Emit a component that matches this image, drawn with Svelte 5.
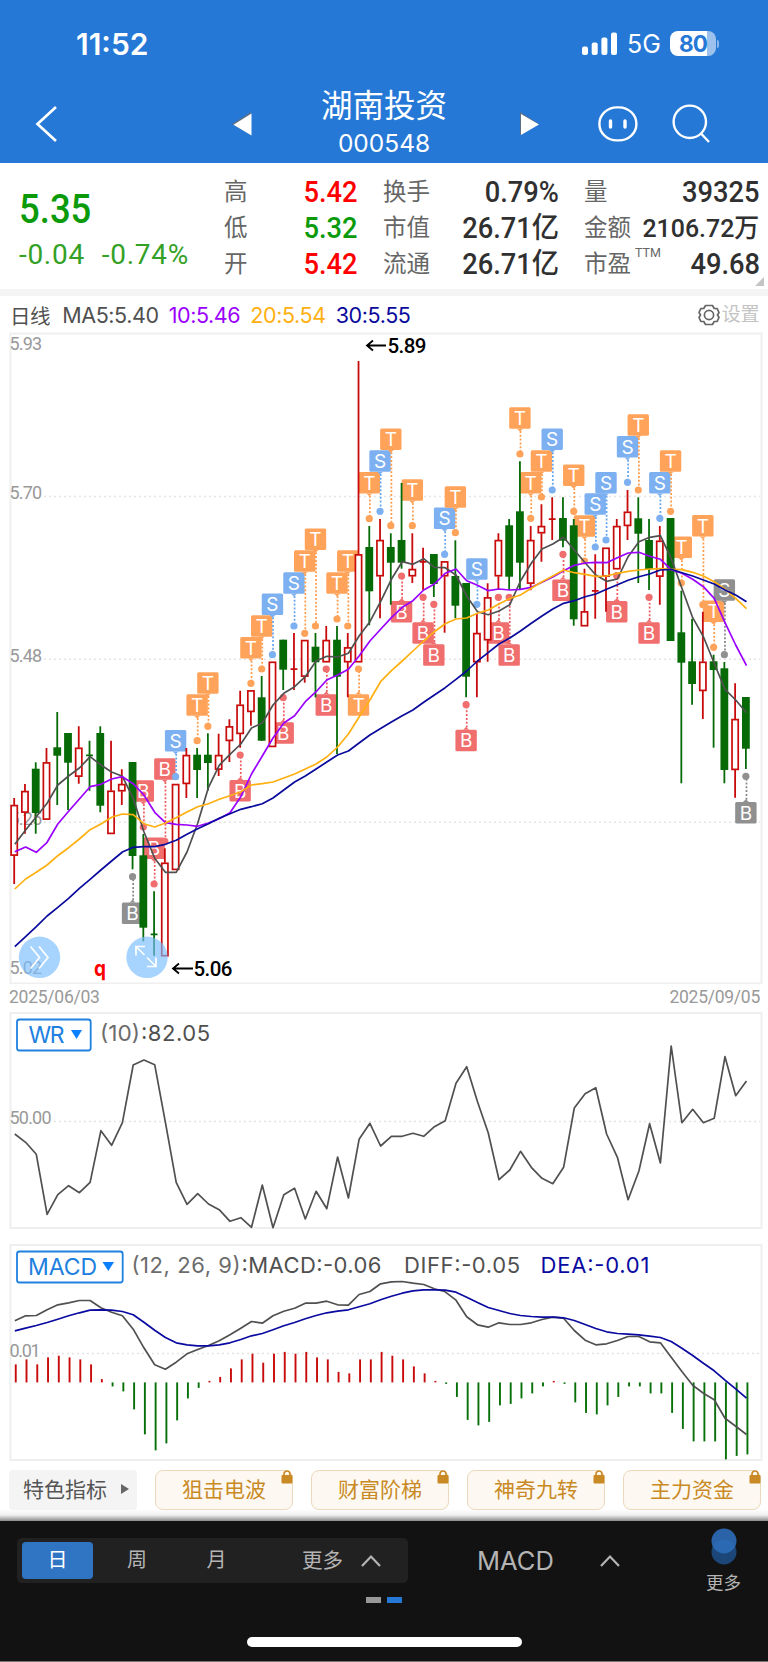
<script>
    const STEP = 10.76
    const x = (i) => 14.2 + STEP * i

    // kind, high, body top, body bottom, low
    const candles = [
        ['r',798,805,855.7,884],['r',784,791,812.7,833.7],['g',762.3,768.7,813,833.7],['r',748,762.3,819.7,819.7],
        ['g',712,747.3,755.7,805],['g',733,733,762.7,810],['r',726.3,747.7,776.7,783.7],['g',740.7,755,756,790.7],
        ['g',726.3,733,805.7,812.3],['r',740.7,790.7,834,834],['r',769.3,784,791.3,805],['g',762,762,856,869.3],
        ['g',834,855.3,927.7,941.3],['g',891.3,934,935,955.7],['r',848.3,862.7,956.3,956.3],['r',784,784,870,870],
        ['r',748,755,784,798],['g',748,754.7,770,798],['g',733.3,754.7,763,790.7],['r',733.7,755,769.7,776],
        ['r',719.3,726.3,741,762],['r',690.7,704.7,734,747.7],['r',690.3,690.3,712,725.7],['g',676,697.3,740.7,741],
        ['r',661.7,661.7,747,747],['g',639.7,639.7,669.7,690],['r',633,668.7,669.3,690],['r',640,640,676.7,682.7],
        ['g',633,646.7,662.3,697.3],['r',626,640,662.3,662.3],['g',626,639.7,676.7,754],['r',633,647.3,662.3,697.3],
        ['r',361,554.3,662.3,662.3],['g',526,547,591.3,625.3],['r',519,540,576.3,618.3],['g',533.3,547,562.7,604.7],
        ['g',483,540,562.7,568.7],['r',533.3,569,576.3,583],['r',547.7,561.5,562,590],['g',554,554,584,597],
        ['r',561.3,561.3,576.3,632.7],['g',540.3,576,605.7,618.3],['g',583,583,676.7,697.3],['r',613.3,633,662.3,697.3],
        ['r',583.3,597.3,640.3,661.7],['r',533.3,540,576.3,590],['g',519,525.3,576.7,590],['g',461.3,511.3,562.7,589],
        ['r',526,540,583.7,590.3],['r',504.3,526,533.3,561.7],['r',497.3,518.7,519.3,540],['g',497.3,518,540.7,547.3],
        ['g',519,525.3,619.3,625.7],['r',568.7,611.3,626.3,626.3],['r',554.3,590.5,591,618.7],['r',547.7,547.7,576.7,611.7],
        ['r',519,526,569.3,569.3],['r',490,511.7,526,540],['g',497.3,518.3,533.7,583],['g',519,540,569.3,590],
        ['r',526,540.7,576.7,604.7],['g',518,518,641,641],['g',590.7,632.3,662.7,783.3],['g',618.7,661.3,684,704.7],
        ['r',611.7,661.7,691,719],['g',654.7,661.3,670,747.7],['g',662,668.3,770,783.3],['r',683.3,719,770,797.7],
        ['g',697,697,748.7,769]
    ]

    const ma5 = [844.3,830,816.7,803.3,785,776,768,756.7,765,772,776.3,798.3,831.7,858.3,872.3,872.3,852,823.3,787.3,765.3,754.3,744,728,723,705,693.3,686.7,676.7,661,656.3,657,653.3,636,621.7,601.7,579.3,561.7,564.3,558.7,567.3,567.7,575,596,611.7,614.7,611,604.7,581,563.3,549,544,537.3,550,562.7,575,581.3,579,556.7,541.7,537.3,535.7,558.3,588.3,617.7,636.7,663.3,689.3,700,712.7]
    const ma10 = [851.7,847,852.3,842.3,824,811.3,799,786.7,784.3,779,776.7,783.7,795,812.3,822.7,824.3,825,826.3,823,818.7,812.7,796.7,774,756,738,723,715.7,701.7,691.7,680,675,669.3,656,641,629.3,617.7,607.3,600.7,590,584,573.3,569,580.7,585.3,590.7,589,590,589.3,587.3,582.3,577,570.7,565.3,563,562.3,562.7,557.7,553,552.3,556.3,559.3,569.7,573.3,579.3,586.7,598.3,622.7,645,665.7]
    const ma20 = [889,879,872.3,865,855.7,847.7,839,829.7,824,817.3,814,814.7,823.7,827,823,817.7,812,806.7,803.7,799.3,795.7,791.7,785,783.7,782,778,774,769,764,757,747,734,717,700,681.7,670.7,661,651,641,631.7,623.7,619,618,613.3,610,604,598.5,595,588.3,581.7,576,570,572.7,574.3,576.3,576,573.3,571.3,570,569,568.7,569.3,569.7,572.3,576,581.7,589.3,598.3,608.7]
    const ma30 = [946.7,936.7,926.7,916,907.3,898.3,888.3,879.3,870,861,852,847.3,846.7,846.7,844.3,840.3,834.3,828.7,823.7,818.3,813.7,809.3,806.7,803.7,798,790,782,776,769,762,755,751,743,735,728.5,722,715.7,710,702.3,695,687.7,679.3,671,661,652.7,644,638,631,623.3,616,609,603.3,600.7,596.7,594,589.3,584.7,580.3,576.7,574,570,569.3,572.7,576,580,584,590,595,601.7]

    // index, letter, flag centre, dot; a trailing 1 marks an unconfirmed (grey) signal
    const signals = [
        [11,'B',913.3,876.7,1],[12,'B',791,827],[13,'B',848.3,884],[14,'B',769,841.3],[15,'S',740.7,776.7],[17,'T',705,740.7],
        [18,'T',683,726.3],[21,'B',790.7,755],[22,'T',647.7,683.3],[23,'T',626,669],[24,'S',604.3,654.7],[25,'B',733,697.7],
        [26,'S',583,626],[27,'T',561,633.3],[28,'T',539.3,626],[29,'B',705,669],[30,'T',583,619],[31,'T',561,626],
        [32,'T',705,669],[33,'T',482.7,518.7],[34,'S',461,511.3],[35,'T',439.3,525.7],[36,'B',611.7,576],[37,'T',490,525.7],
        [38,'B',633,597.3],[39,'B',655,604.3],[40,'S',518.3,554.3],[41,'T',497,532.7],[42,'B',740.5,704.7],[43,'S',569,604.3],
        [45,'B',633,597.3],[46,'B',655,597.3],[47,'T',418,454],[48,'T',482.7,518.3],[49,'T',461,497],[50,'S',439.3,490],
        [51,'B',590.3,554.3],[52,'T',475.3,511.3],[53,'T',526,561],[54,'S',504,547],[55,'S',482.7,540],[56,'B',611.7,575.7],
        [57,'S',446.7,482.3],[58,'T',425,490],[59,'B',633,597.3],[60,'S',482.7,518.3],[61,'T',461,511.3],[62,'T',547.3,583],
        [64,'T',525.7,604.7],[65,'T',611.3,647.3],[66,'S',590,654.7,1],[68,'B',812.7,776.3,1]
    ]

    const wr = [1134,1142.3,1154.3,1214.3,1194.7,1185.7,1192.7,1182.3,1130.7,1145.3,1122.7,1065,1060,1064.7,1122.3,1182.3,1204.3,1193.7,1204,1209.7,1221.3,1217.7,1227.3,1185,1227.7,1194.7,1188.3,1219,1191.3,1208.7,1157,1198,1139.3,1123.3,1146,1136.3,1136.3,1133.3,1136.3,1126.7,1120.7,1083.3,1066.7,1101.7,1132.7,1179.7,1170,1151.3,1167.3,1178.3,1183.7,1167.3,1108,1093.7,1087.7,1134,1157.3,1199.7,1171,1123.7,1163,1046,1122.7,1109.3,1122.7,1118.3,1056.7,1095.7,1081]
    const diff = [1320.3,1315.3,1315,1309.3,1304.3,1302.3,1300,1300,1307.3,1311.7,1315.3,1328.7,1347.3,1364.3,1368.7,1361.7,1353.3,1349,1345,1340.3,1334.3,1327.7,1321,1322.7,1315.3,1310.7,1307.7,1302.7,1302.7,1300.7,1304.3,1304.7,1294,1291,1283.3,1281.3,1281,1282.7,1284,1288.3,1291.3,1299.7,1316.3,1324.3,1326.7,1322.3,1324,1324,1322.3,1319,1316.7,1317.7,1330,1339.7,1344.3,1343.3,1340,1336,1336,1341.3,1342.3,1356.7,1371,1384.7,1392.7,1399.3,1417.7,1425.7,1434]
    const dea = [1330.3,1327.7,1325,1322,1318.7,1315.3,1312.3,1309.7,1309.3,1309.7,1311,1314.3,1321.7,1329.7,1337,1342.3,1344.3,1345.3,1345.3,1344.3,1342.3,1339,1335.3,1333,1329.3,1325.3,1322,1318.3,1315,1312.3,1310.7,1309.3,1306.3,1303.3,1299.3,1295.7,1292.7,1290.3,1289.3,1289.3,1289.7,1291.7,1296.7,1302,1307,1310,1313,1315,1316,1316.7,1316.7,1317.3,1320,1324,1328,1331.3,1333,1333.7,1334.3,1335.7,1337,1341,1347.7,1355,1362.7,1370.3,1379.7,1388.3,1397.7]
    const bars = [18,23,18,25,26.7,25,23,18,3.3,-4,-9,-27,-52,-68,-61,-38,-16,-5.5,1.5,5.5,14,23,28.7,19.7,28.7,30.5,28.7,30.5,25,23,10.5,9,23,23,30.5,26.7,23,16,9,1.5,-1.5,-14.5,-37.5,-43,-39.5,-23,-21.5,-16,-11,-4,1.5,-1.5,-20,-30.5,-32,-23,-14.5,-4,-4,-11,-11,-30.5,-46.5,-59,-59,-59,-77,-73.5,-72]

    const points = (list) => list.map((y, i) => `${(x(i) + 0.6).toFixed(1)},${y}`).join(' ')

    const quotes = [
        [['高', '5.42', 'up'], ['低', '5.32', 'down'], ['开', '5.42', 'up']],
        [['换手', '0.79%', ''], ['市值', '26.71亿', ''], ['流通', '26.71亿', '']],
        [['量', '39325', ''], ['金额', '2106.72万', 'small'], ['市盈', '49.68', '']]
    ]
    const grid = [[496.5, '5.70'], [659.3, '5.48'], [822.3, '5.25']]
    const features = ['狙击电波', '财富阶梯', '神奇九转', '主力资金']
</script>

<div class="page">
    <header>
        <div class="status">
            <span class="time">11:52</span>
            <svg class="signal" width="36" height="24" viewBox="0 0 36 24" fill="#fff">
                <rect x="0" y="14.5" width="6" height="8.5" rx="2"/>
                <rect x="9.7" y="10.5" width="6" height="12.5" rx="2"/>
                <rect x="19.4" y="5.5" width="6" height="17.5" rx="2"/>
                <rect x="29" y="0.5" width="6" height="22.5" rx="2"/>
            </svg>
            <span class="net">5G</span>
            <span class="battery"><b>80</b></span>
            <i class="cap"></i>
        </div>
        <nav>
            <svg width="24" height="38" viewBox="0 0 24 38" fill="none" stroke="#fff" stroke-width="2.7"><path d="M21 2 2.5 19 21 36"/></svg>
            <svg class="prev" width="22" height="24" viewBox="0 0 22 24"><path d="M20 0v23L1 12z" fill="#5d6f86"/><path d="M20.5 1.5v22L2.5 12.7z" fill="#fff"/></svg>
            <div class="title">
                <h1>湖南投资</h1>
                <p>000548</p>
            </div>
            <svg class="next" width="22" height="24" viewBox="0 0 22 24"><path d="M1 0v23l19-11z" fill="#5d6f86"/><path d="M2 2v21l18-10.5z" fill="#fff"/></svg>
            <svg class="face" width="40" height="36" viewBox="0 0 40 36" fill="none" stroke="#fff">
                <rect x="1.4" y="1.4" width="37" height="33" rx="17.5" stroke-width="2.4"/>
                <path d="M12.5 15v6M27 15v6" stroke-width="3.4" stroke-linecap="round"/>
            </svg>
            <svg class="search" width="40" height="40" viewBox="0 0 40 40" fill="none" stroke="#fff" stroke-width="2.4">
                <circle cx="17.8" cy="17.8" r="16.2"/><path d="m29 29.5 8 8.5"/>
            </svg>
        </nav>
    </header>

    <section class="quote">
        <div class="price">
            <strong>5.35</strong>
            <div><span>-0.04</span><span>-0.74%</span></div>
        </div>
        {#each quotes as col}
            <dl>
                {#each col as [name, value, cls]}
                    <dt>{name}{#if name === '市盈'}<sup>TTM</sup>{/if}</dt>
                    <dd class={cls}><span>{value}</span></dd>
                {/each}
            </dl>
        {/each}
        <i class="corner"></i>
    </section>

    <section class="averages">
        <span class="day">日线</span>
        <span>MA5:5.40</span>
        <span class="m10">10:5.46</span>
        <span class="m20">20:5.54</span>
        <span class="m30">30:5.55</span>
        <span class="settings">
            <svg width="22" height="22" viewBox="0 0 22 22" fill="none" stroke="#666" stroke-width="1.7">
                <path d="M7.5 1.5 5.8 4.5 2.8 4.7 1 8.5 2.5 11 1 13.5 2.8 17.3 5.8 17.5 7.5 20.5h7l1.7-3 3-.2 1.8-3.8-1.5-2.5 1.5-2.5-1.8-3.8-3-.2-1.7-3z" stroke-linejoin="round"/>
                <circle cx="11" cy="11" r="4.6"/>
            </svg>设置
        </span>
    </section>

    <svg width="768" height="652" viewBox="0 332 768 652">
        <rect class="frame" x="10.5" y="333.5" width="751" height="650"/>
        {#each grid as [y, label]}
            <line class="dots" x1="44" x2="760" y1={y} y2={y}/>
            <text class="axis" x="9.5" y={y + 2.7} textLength="32.5">{label}</text>
        {/each}
        <text class="axis" x="9.5" y="350" textLength="32.5">5.93</text>
        <text class="axis" x="9.5" y="974" textLength="32.5">5.02</text>

        {#each signals as [i, letter, box, dot, off]}
            {@const dir = dot > box ? 1 : -1}
            <g class={off ? 'sig off' : 'sig ' + letter}>
                <line x1={x(i) + 0.6} x2={x(i) + 0.6} y1={box + dir * 13} y2={dot}/>
                <circle cx={x(i)} cy={dot} r="3.6"/>
                <rect x={x(i) - 10.7} y={box - 10.7} width="21.4" height="21.4" rx="1.5"/>
                <path d="M{x(i) - 3} {box + dir * 10.7}h6l-3 {dir * 2.8}z"/>
                <text x={x(i)} y={box + 6.8}>{letter}</text>
            </g>
        {/each}

        {#each candles as [kind, high, top, bottom, low], i}
            {#if bottom - top < 2}
                <path class="wick {kind}" d="M{x(i)} {high}V{low}M{x(i) - 3.4} {top + 0.4}h6.8"/>
            {:else if kind === 'g'}
                <path class="wick g" d="M{x(i)} {high}V{low}"/>
                <rect class="body g" x={x(i) - 3.9} y={top} width="7.8" height={bottom - top}/>
            {:else}
                <path class="wick r" d="M{x(i)} {high}V{top}M{x(i)} {bottom}V{low}"/>
                <rect class="body r" x={x(i) - 3.1} y={top + 0.6} width="6.2" height={bottom - top - 1.2}/>
            {/if}
        {/each}

        <polyline class="ma" points={points(ma5)} stroke="#505050"/>
        <polyline class="ma" points={points(ma10)} stroke="#9b00ff"/>
        <polyline class="ma" points={points(ma20)} stroke="#ffb010"/>
        <polyline class="ma" points={points(ma30)} stroke="#0a0a9c"/>

        <g class="extreme">
            <path d="M386 345.5h-19m6-5-6 5 6 5"/>
            <text x="387.5" y="352.5" textLength="39">5.89</text>
            <path d="M193 968.5h-20m6-5-6 5 6 5"/>
            <text x="193.5" y="976" textLength="39">5.06</text>
        </g>
        <text class="mark" x="94" y="976" textLength="12" lengthAdjust="spacingAndGlyphs">q</text>

        <circle class="float" cx="39.5" cy="957.3" r="20.7"/>
        <path class="float-icon" d="m30.5 946.5 9 11-9 11m8.5-22 9 11-9 11"/>
        <circle class="float" cx="147" cy="957.3" r="20.7"/>
        <path class="float-icon" d="M136 955.5v-9h9m-8.5.5 8 8m2.5 2.5 8.5 8.5m.5-8.5v9h-9"/>
    </svg>

    <div class="dates"><span>2025/06/03</span><span>2025/09/05</span></div>

    <svg width="768" height="217" viewBox="0 1012 768 217">
        <rect class="frame" x="10.5" y="1013" width="751" height="215"/>
        <line class="dots" x1="54" x2="760" y1="1121.5" y2="1121.5"/>
        <text class="axis" x="9.5" y="1124" textLength="42">50.00</text>
        <rect class="select" x="17" y="1019.5" width="73.7" height="31" rx="2.5"/>
        <text class="name" x="28.5" y="1042.5" textLength="36">WR</text>
        <path d="M71 1030h11l-5.5 9z" fill="#0a80ff"/>
        <text class="value soft" x="100" y="1041" textLength="40" lengthAdjust="spacingAndGlyphs">(10)</text>
        <text class="value" x="141" y="1041" textLength="69">:82.05</text>
        <polyline class="ma" points={points(wr)} stroke="#505050"/>
    </svg>

    <svg class="macd" width="768" height="217" viewBox="0 1243.5 768 217">
        <rect class="frame" x="10.5" y="1244.5" width="751" height="215"/>
        <line class="dots" x1="42" x2="760" y1="1353" y2="1353"/>
        <text class="axis" x="9.5" y="1356" textLength="31">0.01</text>
        {#each bars as h, i}
            <rect x={x(i) + 0.6} y={h > 0 ? 1381.9 - h : 1381.9} width="1.9" height={Math.abs(h)} fill={h > 0 ? '#c80a0a' : '#087008'}/>
        {/each}
        <rect class="select" x="17" y="1251" width="105.7" height="31" rx="2.5"/>
        <text class="name" x="28" y="1274" textLength="69">MACD</text>
        <path d="M102.5 1261.5h11.5l-5.7 9z" fill="#0a80ff"/>
        <text class="value soft" x="131.5" y="1272.5" textLength="109">(12, 26, 9)</text>
        <text class="value" x="241.5" y="1272.5" textLength="140">:MACD:-0.06</text>
        <text class="value" x="404" y="1272.5" textLength="116">DIFF:-0.05</text>
        <text class="value navy" x="540.5" y="1272.5" textLength="109">DEA:-0.01</text>
        <polyline class="ma" points={points(diff)} stroke="#505050"/>
        <polyline class="ma" points={points(dea)} stroke="#0a0aa0"/>
    </svg>

    <div class="features">
        <button class="all">特色指标 <i></i></button>
        {#each features as name}
            <button>
                {name}
                <svg width="12" height="14" viewBox="0 0 12 14"><path d="M3 6V4a3 3 0 0 1 6 0v2" fill="none" stroke="#c98a25" stroke-width="1.7"/><rect x=".5" y="5" width="11" height="8.5" rx="1" fill="#c98a25"/></svg>
            </button>
        {/each}
    </div>

    <footer>
        <div class="tools">
            <div class="periods">
                <span class="active">日</span>
                <span>周</span>
                <span>月</span>
                <span class="more">更多 <svg width="20" height="13" viewBox="0 0 20 13"><path d="m1 12 9-9.5 9 9.5"/></svg></span>
            </div>
            <div class="indicator">MACD <svg width="20" height="13" viewBox="0 0 20 13"><path d="m1 12 9-9.5 9 9.5"/></svg></div>
            <div class="menu">
                <svg width="26" height="37" viewBox="0 0 26 37"><circle cx="13" cy="24" r="12.5" fill="#1c4678"/><circle cx="13" cy="13" r="12.5" fill="#2d6db8" opacity=".9"/></svg>
                更多
            </div>
        </div>
        <div class="pager"><i></i><i class="on"></i></div>
        <div class="home"></div>
    </footer>
</div>

<style>
    :global(body) {
        margin: 0;
        background: #fff;
    }
    .page {
        width: 768px;
        height: 1662px;
        overflow: hidden;
        font-family: Inter, "Noto Sans CJK SC", sans-serif;
        color: #505050;
    }
    svg {
        display: block;
        flex: none;
    }
    header {
        height: 163px;
        background: #2578d6;
        color: #fff;
    }
    .status {
        display: flex;
        align-items: center;
        height: 86px;
        box-sizing: border-box;
        padding: 1px 49px 0 76px;
    }
    .time {
        margin-right: auto;
        font-size: 30px;
        font-weight: 600;
    }
    .signal {
        margin-right: 9px;
    }
    .net {
        width: 43px;
        font-size: 25px;
    }
    .battery {
        width: 46px;
        height: 25px;
        border-radius: 8px;
        background: linear-gradient(90deg, #fff 80%, #9bc1ec 80%);
        color: #2578d6;
        font-size: 22.5px;
        line-height: 25px;
        text-align: center;
    }
    .battery b {
        letter-spacing: -0.8px;
    }
    .cap {
        width: 2px;
        height: 8px;
        margin-left: 1px;
        border-radius: 0 3px 3px 0;
        background: #8ab6e8;
    }
    nav {
        height: 75px;
        display: grid;
        grid-template-columns: 24px 194px 262px 24px 56px 76px;
        align-items: center;
        padding-left: 35px;
    }
    .prev {
        margin-left: 172px;
    }
    .next {
        margin-left: 4px;
    }
    .title {
        text-align: center;
    }
    .face {
        margin-left: 59px;
    }
    .search {
        margin-left: 77px;
    }
    .title h1 {
        margin: 0;
        font-size: 31.5px;
        font-weight: 400;
        line-height: 40px;
    }
    .title p {
        margin: 0;
        font-size: 24.5px;
        line-height: 35px;
    }
    .quote {
        position: relative;
        display: grid;
        grid-template-columns: 205px 134px 201px 200.5px;
        height: 126px;
        padding-left: 19px;
        border-bottom: 7px solid #f4f4f4;
        font-family: Roboto, "Noto Sans CJK SC", sans-serif;
    }
    .price strong {
        display: block;
        margin-top: 22px;
        font-size: 41px;
        font-weight: 500;
        line-height: 48px;
        color: #0a9a0a;
        transform: scaleX(0.89);
        transform-origin: left;
    }
    .price div {
        display: flex;
        gap: 17px;
        margin-top: 5px;
        font-size: 28px;
        line-height: 34px;
        letter-spacing: 0.7px;
        color: #34a126;
    }
    dl {
        display: grid;
        grid-template-columns: 48px 1fr;
        grid-auto-rows: 36px;
        margin: 11px 0 0;
        line-height: 36px;
    }
    dl + dl {
        margin-left: 25px;
    }
    dt {
        font-size: 23.5px;
        color: #666;
        white-space: nowrap;
    }
    sup {
        position: relative;
        top: -6px;
        margin-left: 4px;
        font-size: 12.5px;
        line-height: 0;
    }
    dd {
        margin: 0;
        font-size: 29px;
        font-weight: 500;
        color: #303030;
        text-align: right;
        white-space: nowrap;
    }
    dd span {
        display: inline-block;
        transform: scaleX(0.94);
        transform-origin: right;
    }
    dd.small {
        font-size: 26.5px;
    }
    dd.up {
        color: #f00;
    }
    dd.down {
        color: #0a9a0a;
    }
    .corner {
        position: absolute;
        right: 4px;
        bottom: 3px;
        border-left: 9px solid transparent;
        border-bottom: 9px solid #c4c4c4;
    }
    .averages {
        display: flex;
        align-items: center;
        height: 36px;
        padding: 2px 9px 0 10px;
        box-sizing: border-box;
        font-size: 21.5px;
        letter-spacing: -0.4px;
    }
    .averages span {
        margin-right: 10px;
        white-space: nowrap;
    }
    .averages .day {
        margin-right: 12px;
        font-size: 20.5px;
    }
    .averages .settings {
        display: flex;
        align-items: center;
        gap: 2px;
        margin: 0 0 0 auto;
        font-size: 19px;
        line-height: 22px;
        color: #c4c4c4;
    }
    .m10 {
        color: #9b00ff;
    }
    .m20 {
        color: #ffb010;
    }
    .m30 {
        color: #0a0a9c;
    }
    .frame {
        fill: none;
        stroke: #efefef;
        stroke-width: 2;
    }
    .dots {
        stroke: #e4e4e4;
        stroke-width: 1.5;
        stroke-dasharray: 2 3;
    }
    .axis {
        font: 18px Roboto, sans-serif;
        fill: #999;
    }
    .ma {
        fill: none;
        stroke-width: 1.7;
        stroke-linejoin: round;
    }
    .wick {
        fill: none;
        stroke-width: 1.8;
    }
    .wick.r {
        stroke: #c80a0a;
    }
    .wick.g {
        stroke: #066a06;
    }
    .body.g {
        fill: #066a06;
    }
    .body.r {
        fill: #fff;
        stroke: #c80a0a;
        stroke-width: 1.7;
    }
    .sig {
        fill: #ffa35a;
        stroke: #ff9a48;
    }
    .sig.S {
        fill: #7db0f1;
        stroke: #62a5f0;
    }
    .sig.B {
        fill: #f06e6e;
        stroke: #ee5a5e;
    }
    .sig.off {
        fill: #909090;
        stroke: #868686;
    }
    .sig line {
        stroke-width: 1.7;
        stroke-dasharray: 2 1.8;
    }
    .sig rect,
    .sig path,
    .sig circle,
    .sig text {
        stroke: none;
    }
    .sig text {
        font: 19px Inter, sans-serif;
        fill: #fff;
        text-anchor: middle;
    }
    .extreme path {
        fill: none;
        stroke: #000;
        stroke-width: 1.8;
    }
    .extreme text {
        font: 500 20.5px Roboto, sans-serif;
        fill: #000;
    }
    .mark {
        font: 700 22px Inter, sans-serif;
        fill: #f00;
    }
    .float {
        fill: #7abcff;
        opacity: 0.66;
    }
    .float-icon {
        fill: none;
        stroke: #fff;
        stroke-width: 1.7;
    }
    .dates {
        display: flex;
        justify-content: space-between;
        height: 28px;
        padding: 0 8px 0 9px;
        font: 17.5px/26px Roboto, sans-serif;
        letter-spacing: -0.25px;
        color: #999;
    }
    .macd {
        margin-top: 14.5px;
    }
    .select {
        fill: #fff;
        stroke: #2080e0;
        stroke-width: 1.8;
    }
    .name {
        font: 23px Inter, sans-serif;
        fill: #2080e0;
    }
    .value {
        font: 22px Inter, sans-serif;
        fill: #505050;
    }
    .value.soft {
        fill: #6c6c6c;
    }
    .value.navy {
        fill: #0a0aa0;
    }
    .features {
        display: flex;
        align-items: center;
        gap: 18px;
        height: 60.5px;
        padding: 0 7px 2px 9px;
        box-sizing: border-box;
        background: linear-gradient(#fff 48px, #f0f0f0 54px, #8a8a8a);
    }
    button {
        position: relative;
        flex: 1;
        height: 40px;
        padding: 0;
        box-sizing: border-box;
        border: 1.5px solid #ecd9bb;
        border-radius: 8px;
        background: #fdf9f2;
        color: #c98a25;
        font: 21px/36px Inter, "Noto Sans CJK SC", sans-serif;
    }
    button.all {
        flex: none;
        width: 128px;
        padding-left: 4px;
        border: 0;
        border-radius: 4px;
        background: #f4f4f4;
        color: #555;
    }
    .all i {
        display: inline-block;
        margin: 0 -2px 3px 8px;
        border: 5.5px solid transparent;
        border-left: 8px solid #666;
        border-right: 0;
    }
    button svg {
        position: absolute;
        top: -1px;
        right: -1px;
    }
    footer {
        height: 141px;
        box-sizing: border-box;
        border-bottom: 1px solid #777;
        background: #121212;
        color: #b4b4b4;
    }
    footer svg {
        fill: none;
        stroke: #b4b4b4;
        stroke-width: 2.2;
    }
    .menu svg {
        stroke: none;
    }
    .tools {
        display: flex;
        height: 76px;
        padding: 0 27px 0 17px;
    }
    .periods {
        display: flex;
        align-items: center;
        width: 391px;
        height: 45px;
        margin-top: 17px;
        padding: 0 5px;
        box-sizing: border-box;
        border-radius: 5px;
        background: #212121;
        font-size: 20px;
    }
    .periods span {
        width: 71px;
        margin-right: 8.5px;
        line-height: 37px;
        text-align: center;
    }
    .periods .active {
        border-radius: 4px;
        background: #3075c4;
        color: #fff;
    }
    .periods .more {
        display: flex;
        align-items: center;
        justify-content: space-between;
        width: 79px;
        margin: 0 0 0 auto;
        padding-right: 22px;
        font-size: 20.5px;
        white-space: nowrap;
    }
    .indicator {
        display: flex;
        align-items: center;
        justify-content: space-between;
        width: 143px;
        margin: 3px auto 0 69px;
        font-size: 25.5px;
    }
    .menu {
        display: flex;
        flex-direction: column;
        align-items: center;
        margin-top: 7px;
        font-size: 17.5px;
        line-height: 36px;
    }
    .pager {
        display: flex;
        justify-content: center;
        gap: 6px;
    }
    .pager i {
        width: 15px;
        height: 6px;
        background: #999;
    }
    .pager .on {
        background: #2578d6;
    }
    .home {
        width: 275px;
        height: 10px;
        margin: 34px auto 0;
        border-radius: 5px;
        background: #fff;
    }
</style>
